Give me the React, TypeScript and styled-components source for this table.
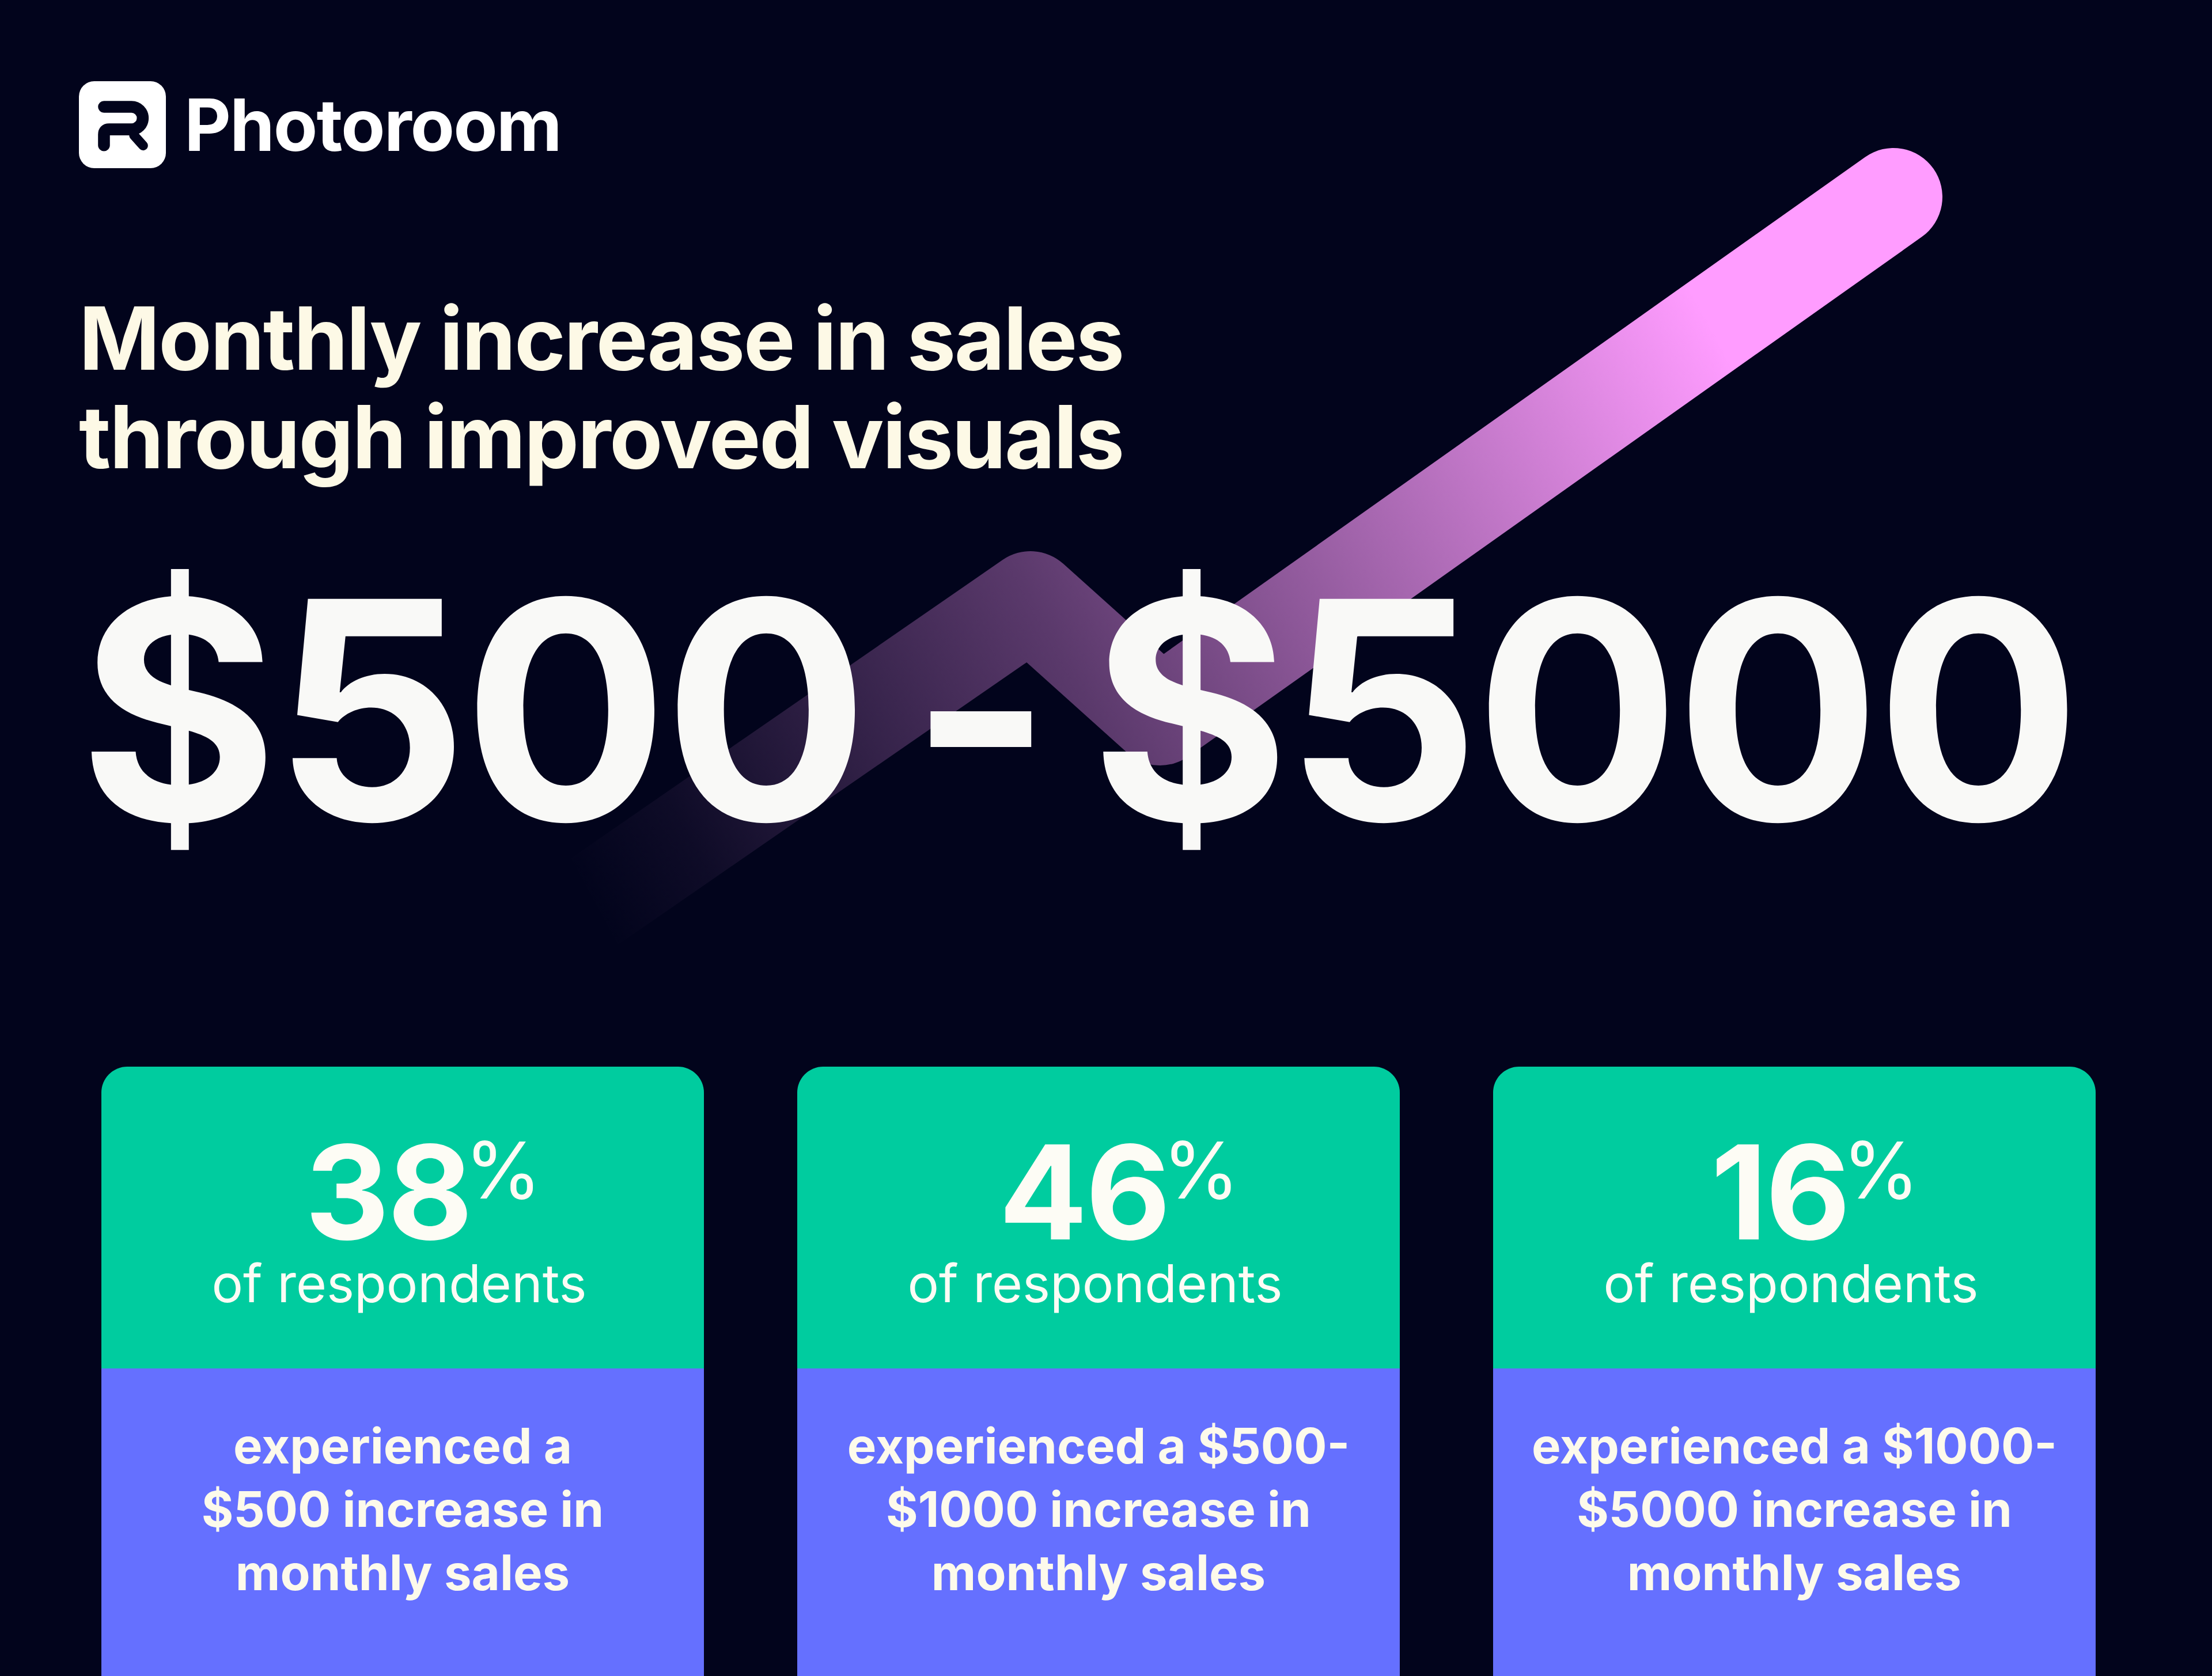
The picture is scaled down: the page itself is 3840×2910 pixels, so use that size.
import React from 'react'
import styled, { createGlobalStyle } from 'styled-components'

const GlobalStyle = createGlobalStyle`
  html, body {
    margin: 0;
    padding: 0;
    background: #02041c;
  }
  body {
    font-family: Inter, "Liberation Sans", sans-serif;
  }
`

const Page = styled.div`
  position: relative;
  width: 3840px;
  height: 2910px;
  overflow: hidden;
  background: #02041c;
`
const Chart = styled.svg`
  position: absolute;
  top: 0;
  left: 0;
  z-index: 0;
`
const Content = styled.div`
  position: relative;
  z-index: 1;
  padding: 141px 0 0 137px;
  display: flex;
  flex-direction: column;
`
const Brand = styled.div`
  display: flex;
  align-items: center;
  gap: 32px;
`
const BrandName = styled.span`
  color: #ffffff;
  font-size: 125px;
  font-weight: 700;
  letter-spacing: -2px;
  line-height: 1;
`
const Heading = styled.h1`
  margin: 210px 0 0 0;
  color: #fdf9e6;
  font-size: 151px;
  font-weight: 700;
  line-height: 171px;
  letter-spacing: -2.5px;
`
const BigRange = styled.div`
  margin-top: 124px;
  color: #f9f9f7;
  font-size: 528px;
  font-weight: 700;
  line-height: 1;
  letter-spacing: -8px;
  word-spacing: -34px;
  white-space: nowrap;
`
const Dash = styled.span`
  letter-spacing: -16px;
  margin-left: -4px;
`
const Cards = styled.div`
  margin: 356px 0 0 39px;
  display: flex;
  gap: 162px;
`
const Card = styled.div`
  width: 1046px;
  height: 1100px;
  border-radius: 45px 45px 0 0;
  overflow: hidden;
  display: flex;
  flex-direction: column;
`
const CardTop = styled.div`
  height: 524px;
  box-sizing: border-box;
  padding-top: 116px;
  background: #00cc9f;
  display: flex;
  flex-direction: column;
  align-items: center;
  color: #fdfcf5;
`
const Stat = styled.div`
  display: flex;
  align-items: flex-start;
  padding-left: 72px;
  font-size: 227px;
  font-weight: 700;
  line-height: 0.9;
  letter-spacing: -3px;
`
const Pct = styled.span`
  margin: -4px 0 0 -11px;
  font-size: 136px;
  font-weight: 400;
  line-height: 1;
  letter-spacing: 0;
`
const Label = styled.div`
  margin: 2px 12px 0 0;
  font-size: 91px;
  font-weight: 400;
  line-height: 1.2;
  letter-spacing: 0;
`
const CardBottom = styled.div`
  flex: 1;
  padding-top: 80px;
  background: #6570ff;
  color: #fdfaeb;
  font-size: 85px;
  font-weight: 700;
  line-height: 110px;
  letter-spacing: 0;
  text-align: center;
`

const stats = [
  { value: '38', lines: ['experienced a', '$500 increase in', 'monthly sales'] },
  { value: '46', lines: ['experienced a $500-', '$1000 increase in', 'monthly sales'] },
  { value: '16', lines: ['experienced a $1000-', '$5000 increase in', 'monthly sales'] }
]

function LogoMark () {
  return <svg width="151" height="151" viewBox="20 25 455 455">
    <rect x="20" y="25" width="455" height="455" rx="80" fill="#ffffff" />
    <path
      d="M151 159 H295 A59 59 0 0 1 295 277 H178 Q151 277 151 304 V360"
      fill="none" stroke="#02041c" strokeWidth="62"
      strokeLinecap="round" strokeLinejoin="round" />
    <path d="M308 308 L356 362" fill="none" stroke="#02041c" strokeWidth="50" strokeLinecap="round" />
  </svg>
}

export default function App () {
  return <Page>
    <GlobalStyle />
    <Chart width="3840" height="2910" viewBox="0 0 3840 2910">
      <defs>
        <linearGradient id="trend" gradientUnits="userSpaceOnUse" x1="1025" y1="1570" x2="3287" y2="342">
          <stop offset="0" stopColor="#ff9cff" stopOpacity="0" />
          <stop offset="0.08" stopColor="#ff9cff" stopOpacity="0.05" />
          <stop offset="0.36" stopColor="#ff9cff" stopOpacity="0.35" />
          <stop offset="0.85" stopColor="#ff9cff" stopOpacity="1" />
          <stop offset="1" stopColor="#ff9cff" stopOpacity="1" />
        </linearGradient>
      </defs>
      <polyline
        points="1025,1570 1789,1042 2014,1244 3287,342"
        fill="none" stroke="url(#trend)" strokeWidth="170"
        strokeLinecap="round" strokeLinejoin="round" />
    </Chart>
    <Content>
      <Brand>
        <LogoMark />
        <BrandName>Photoroom</BrandName>
      </Brand>
      <Heading>Monthly increase in sales<br />through improved visuals</Heading>
      <BigRange>$500 <Dash>-</Dash> $5000</BigRange>
      <Cards>
        {stats.map(s => <Card key={s.value}>
          <CardTop>
            <Stat>{s.value}<Pct>%</Pct></Stat>
            <Label>of respondents</Label>
          </CardTop>
          <CardBottom>
            {s.lines.map(l => <div key={l}>{l}</div>)}
          </CardBottom>
        </Card>)}
      </Cards>
    </Content>
  </Page>
}
